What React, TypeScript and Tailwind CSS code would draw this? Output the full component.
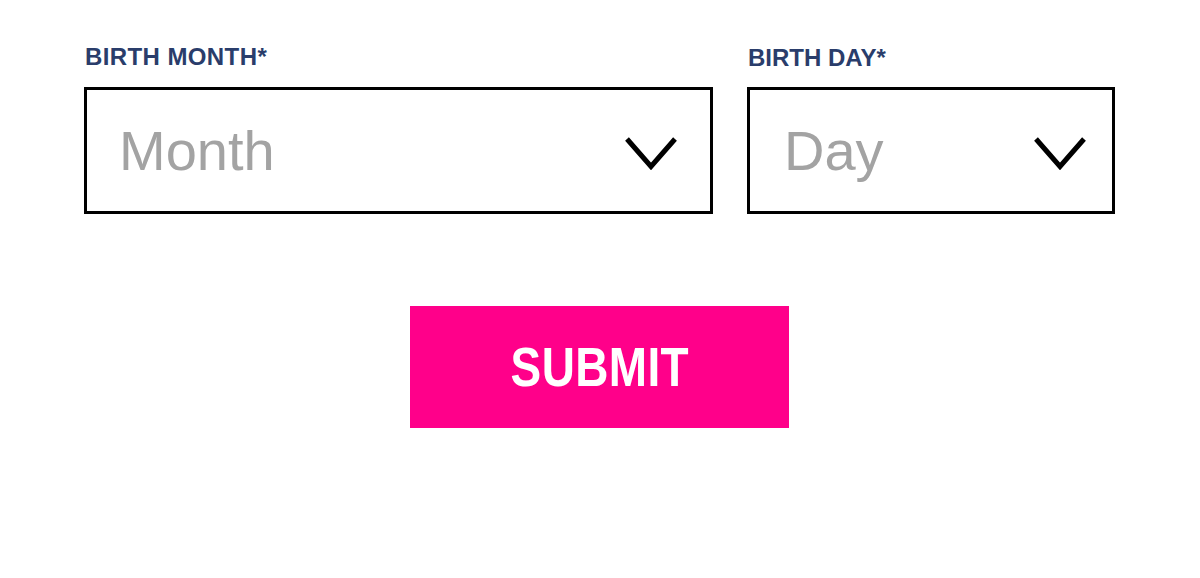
export default function App() {
  return (
    <div className="bg-white min-h-[578px] w-full font-['Liberation_Sans',Arial,sans-serif]">
      <div className="flex gap-[34px] pl-[84px] pt-[43px]">
        <div className="w-[629px] flex flex-col">
          <label className="text-[24px] leading-[27px] font-bold text-[#2a3d6b] tracking-[0.4px] pl-[1px] mb-[17px]">
            BIRTH MONTH*
          </label>
          <div className="h-[127px] border-[3px] border-black flex items-center justify-between pl-[32px] pr-[33px]">
            <span className="text-[56px] leading-none text-[#a3a3a3]">Month</span>
            <ChevronIcon />
          </div>
        </div>
        <div className="w-[368px] flex flex-col">
          <label className="text-[24px] leading-[27px] font-bold text-[#2a3d6b] pl-[1px] mt-[1px] mb-[16px]">
            BIRTH DAY*
          </label>
          <div className="h-[127px] border-[3px] border-black flex items-center justify-between pl-[34px] pr-[26px]">
            <span className="text-[56px] leading-none text-[#a3a3a3]">Day</span>
            <ChevronIcon />
          </div>
        </div>
      </div>
      <div className="flex justify-center mt-[92px] pr-[1px]">
        <button className="w-[379px] h-[122px] bg-[#ff008a] text-white flex items-center justify-center">
          <span className="inline-block text-[56px] font-bold leading-none tracking-[0.5px] scale-x-[0.82]">SUBMIT</span>
        </button>
      </div>
    </div>
  )
}

function ChevronIcon() {
  return (
    <svg width="52" height="33" viewBox="0 0 52 33" fill="none" className="mt-[6px]">
      <polyline points="2,2 26,29.5 50,2" stroke="#000" strokeWidth="5" />
    </svg>
  )
}
